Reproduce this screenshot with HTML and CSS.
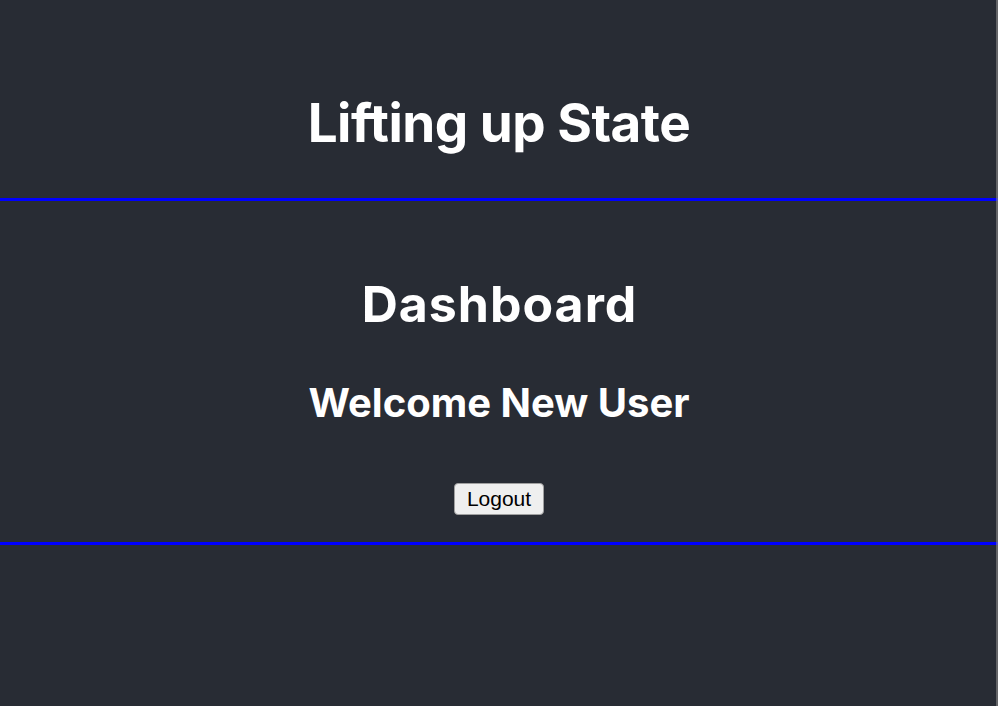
FILE: index.html
```html
<!DOCTYPE html>
<html lang="en">
<head>
<meta charset="utf-8">
<title>Lifting up State</title>
<link rel="stylesheet" href="styles.css">
</head>
<body>
<div class="app">
  <header class="app-header">
    <h1 class="title">Lifting up State</h1>
  </header>
  <section class="dashboard">
    <h1 class="dash-title">Dashboard</h1>
    <h2 class="welcome">Welcome New User</h2>
    <button class="logout" type="button">Logout</button>
  </section>
</div>
</body>
</html>
```
FILE: styles.css
```css
html, body {
  margin: 0;
  padding: 0;
  height: 100%;
  background: #282c34;
}
body {
  font-family: Inter, "Noto Sans", sans-serif;
  color: #ffffff;
}
body::after {
  content: "";
  position: fixed;
  top: 0;
  right: 0;
  width: 2px;
  height: 100%;
  background: rgba(140, 140, 140, 0.6);
}
.app {
  display: flex;
  flex-direction: column;
  text-align: center;
}
.app-header {
  padding: 91px 0 43px;
  border-bottom: 3px solid #0000ff;
}
.title {
  margin: 0;
  font-size: 53px;
  line-height: 64px;
  font-weight: 700;
  letter-spacing: -0.5px;
}
.dashboard {
  display: flex;
  flex-direction: column;
  align-items: center;
  padding: 75px 0 27px;
  border-bottom: 3px solid #0000ff;
}
.dash-title {
  margin: 0;
  padding-left: 1px;
  font-size: 50px;
  line-height: 57px;
  font-weight: 700;
  letter-spacing: 1px;
}
.welcome {
  margin: 46px 0 0;
  font-size: 40px;
  line-height: 48px;
  font-weight: 700;
}
.logout {
  margin-top: 56px;
  height: 32px;
  width: 90px;
  padding: 0;
  font-family: "Liberation Sans", Arial, sans-serif;
  font-size: 21px;
  color: #000000;
  background: #efefef;
  border: 1px solid #a0a0a0;
  border-radius: 4px;
}
```
